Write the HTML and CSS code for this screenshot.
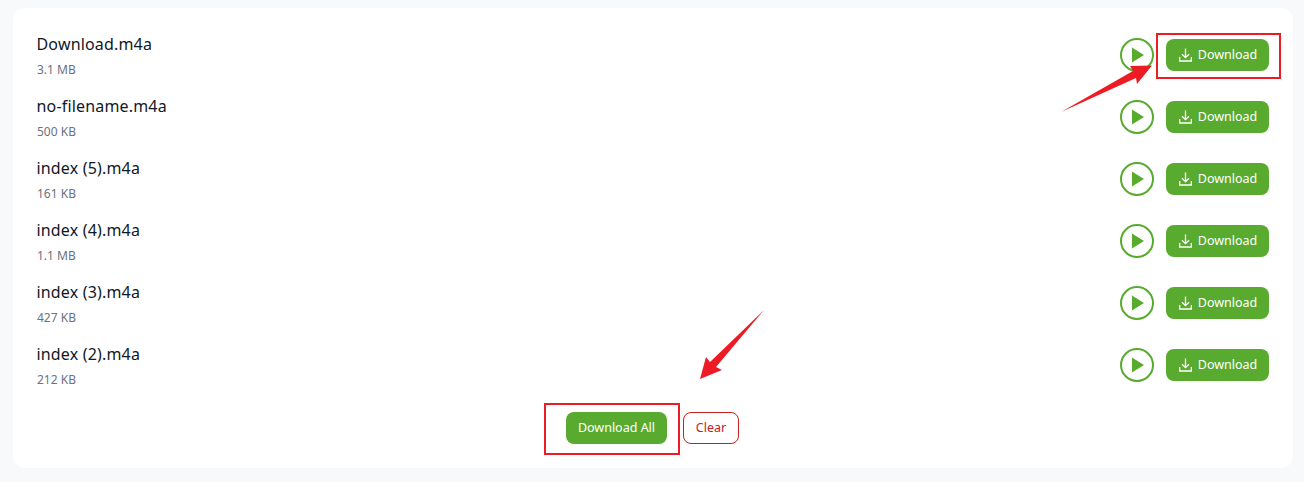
FILE: index.html
```html
<!DOCTYPE html>
<html lang="en">
<head>
    <meta charset="UTF-8">
    <meta name="viewport" content="width=device-width, initial-scale=1.0">
    <title>Downloads</title>
    <link rel="stylesheet" href="styles.css">
</head>
<body>
    <svg width="0" height="0" class="defs">
        <symbol id="icon-play" viewBox="0 0 34 34">
            <circle cx="17" cy="17" r="16" fill="none" stroke="#58ab2f" stroke-width="2"/>
            <path d="M12 9.5 L24 17 L12 24.5 Z" fill="#58ab2f"/>
        </symbol>
        <symbol id="icon-download" viewBox="0 0 13 14">
            <path d="M6.5 .5v9M3 6.2 6.5 9.7 10 6.2M.7 9v4h11.6V9" fill="none" stroke="#fff" stroke-width="1.3"/>
        </symbol>
    </svg>

    <div class="card">
        <div class="file-row">
            <div class="file-info">
                <div class="file-name">Download.m4a</div>
                <div class="file-size">3.1 MB</div>
            </div>
            <svg class="play"><use href="#icon-play"/></svg>
            <button class="btn-download"><svg class="dl-icon"><use href="#icon-download"/></svg>Download</button>
        </div>
        <div class="file-row">
            <div class="file-info">
                <div class="file-name">no-filename.m4a</div>
                <div class="file-size">500 KB</div>
            </div>
            <svg class="play"><use href="#icon-play"/></svg>
            <button class="btn-download"><svg class="dl-icon"><use href="#icon-download"/></svg>Download</button>
        </div>
        <div class="file-row">
            <div class="file-info">
                <div class="file-name">index (5).m4a</div>
                <div class="file-size">161 KB</div>
            </div>
            <svg class="play"><use href="#icon-play"/></svg>
            <button class="btn-download"><svg class="dl-icon"><use href="#icon-download"/></svg>Download</button>
        </div>
        <div class="file-row">
            <div class="file-info">
                <div class="file-name">index (4).m4a</div>
                <div class="file-size">1.1 MB</div>
            </div>
            <svg class="play"><use href="#icon-play"/></svg>
            <button class="btn-download"><svg class="dl-icon"><use href="#icon-download"/></svg>Download</button>
        </div>
        <div class="file-row">
            <div class="file-info">
                <div class="file-name">index (3).m4a</div>
                <div class="file-size">427 KB</div>
            </div>
            <svg class="play"><use href="#icon-play"/></svg>
            <button class="btn-download"><svg class="dl-icon"><use href="#icon-download"/></svg>Download</button>
        </div>
        <div class="file-row">
            <div class="file-info">
                <div class="file-name">index (2).m4a</div>
                <div class="file-size">212 KB</div>
            </div>
            <svg class="play"><use href="#icon-play"/></svg>
            <button class="btn-download"><svg class="dl-icon"><use href="#icon-download"/></svg>Download</button>
        </div>
        <div class="actions">
            <button class="btn-all">Download All</button>
            <button class="btn-clear">Clear</button>
        </div>
    </div>

    <!-- red annotations drawn over the screenshot -->
    <svg class="marks" width="1304" height="482" viewBox="0 0 1304 482">
        <rect x="1157" y="34" width="123" height="44" fill="none" stroke="#ed1c24" stroke-width="2"/>
        <rect x="545" y="404" width="134" height="50" fill="none" stroke="#ed1c24" stroke-width="2"/>
        <path d="M1061 112 L1133 71 L1130 66 L1152 65.5 L1137 84 L1136 78 Z" fill="#ed1c24"/>
        <path d="M764 310 L710 362 L706 357 L700 379 L722 370 L716 367 Z" fill="#ed1c24"/>
    </svg>
</body>
</html>
```

FILE: styles.css
```css
body {
    font-family: 'Noto Sans', 'Open Sans', sans-serif;
    background-color: #f8f9fb;
    color: #111827;
    margin: 0;
    padding: 8px 11px 14px 13px;
}

.defs {
    position: absolute;
}

.card {
    background: white;
    border-radius: 12px;
    padding: 16px 24px 24px;
}

.file-row {
    display: flex;
    align-items: center;
    height: 62px;
}

.file-info {
    flex: 1;
}

.file-name {
    font-size: 16px;
    line-height: 24px;
    letter-spacing: 0.17px;
    margin-left: -0.5px;
}

.file-size {
    font-size: 12px;
    line-height: 16px;
    margin-top: 6px;
    color: #6b7280;
}

.play {
    width: 34px;
    height: 34px;
    margin-right: 12px;
}

button {
    font-family: inherit;
    font-size: 12.5px;
    line-height: 30px;
    height: 32px;
    border-radius: 8px;
    cursor: pointer;
}

.btn-download,
.btn-all {
    background-color: #58ab2f;
    color: white;
    border: none;
    padding: 0 0 1px 1px;
}

.btn-download {
    width: 103px;
    display: flex;
    align-items: center;
    justify-content: center;
    gap: 6px;
}

.dl-icon {
    width: 13px;
    height: 14px;
    margin-top: 1px;
}

.actions {
    display: flex;
    justify-content: center;
    gap: 16px;
    margin-top: 16px;
    padding-right: 2px;
}

.btn-all {
    width: 101px;
}

.btn-clear {
    width: 56px;
    padding: 0 0 0 1px;
    background: white;
    color: #c8201c;
    border: 1px solid #c8201c;
}

.marks {
    position: absolute;
    left: 0;
    top: 0;
    pointer-events: none;
}
```
